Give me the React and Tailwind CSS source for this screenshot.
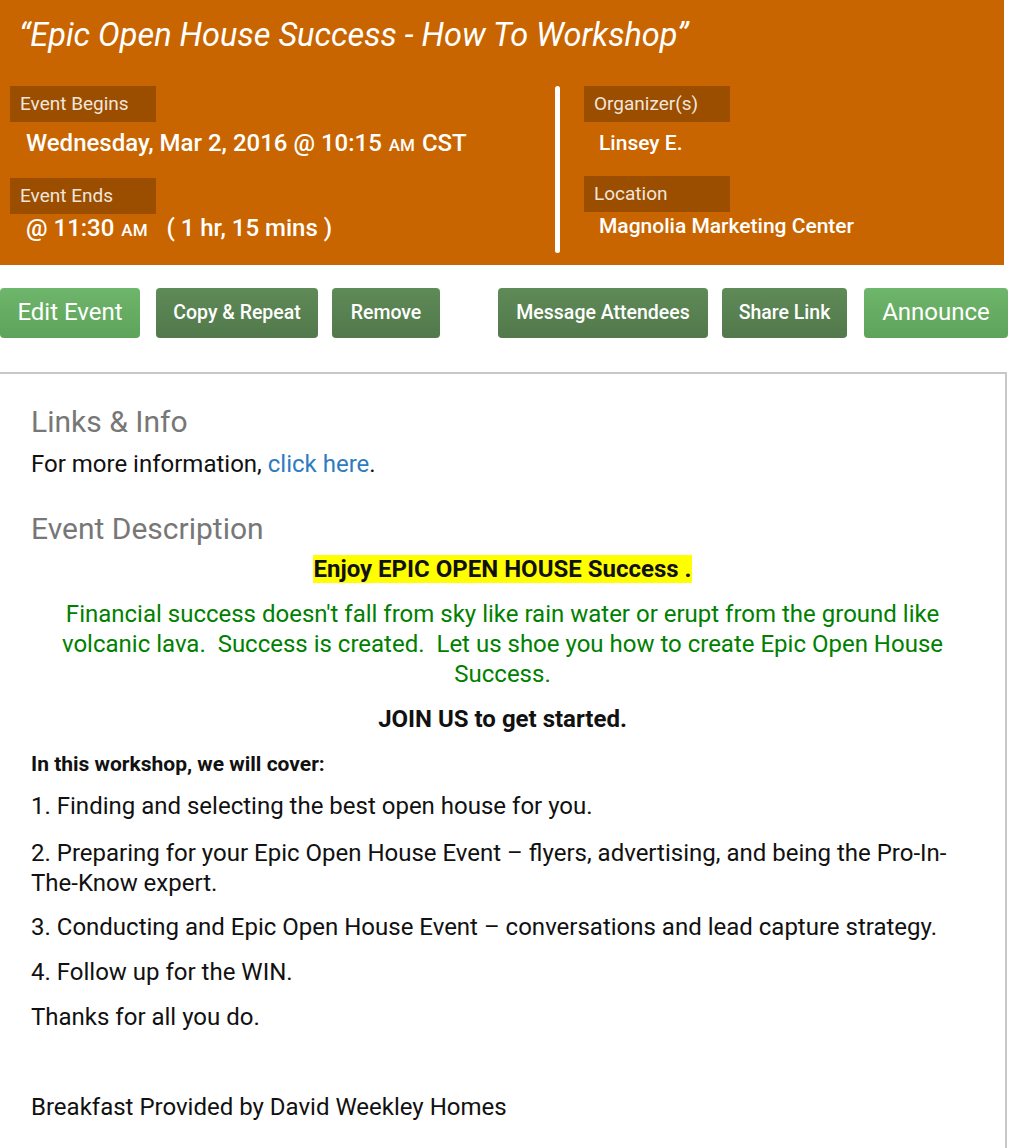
import React from 'react';

function Label({ children }) {
    return (
        <div className="w-[146px] h-[36px] bg-[#9b4d00] pl-[10px] flex items-center text-[19px] text-[#f0e6dc]">
            {children}
        </div>
    );
}

function Am() {
    return <span className="text-[17px] mx-[1px]">AM</span>;
}

export default function App() {
    const light = 'bg-gradient-to-b from-[#6eb66b] to-[#5ea35b] text-white text-[24px] rounded-[4px] h-[50px] flex items-center justify-center pb-[3px]';
    const dark = 'bg-gradient-to-b from-[#5e8b57] to-[#52784b] text-white text-[19.5px] font-medium rounded-[4px] h-[50px] flex items-center justify-center';

    return (
        <div className="min-h-screen bg-white font-['Roboto',sans-serif] w-[1014px]">
            {/* Header */}
            <div className="w-[1004px] bg-[#c96500] pt-[14px] pb-[12px] pl-[10px] text-white">
                <h1 className="pl-[9px] text-[32.5px] leading-[42px] italic">
                    “Epic Open House Success - How To Workshop”
                </h1>

                <div className="mt-[30px] flex h-[167px]">
                    <div className="w-[545px]">
                        <Label>Event Begins</Label>
                        <div className="pt-[6px] pl-[16px] leading-[30px] text-[24px] font-medium">
                            Wednesday, Mar 2, 2016 @ 10:15 <Am /> CST
                        </div>
                        <div className="mt-[18px]">
                            <Label>Event Ends</Label>
                        </div>
                        <div className="pl-[16px] leading-[28px] text-[24px] font-medium whitespace-pre">
                            @ 11:30 <Am />{'   '}( 1 hr, 15 mins )
                        </div>
                    </div>
                    <div className="w-[5px] bg-white rounded-full"></div>
                    <div className="ml-[24px]">
                        <Label>Organizer(s)</Label>
                        <div className="pt-[6px] pl-[15px] leading-[30px] text-[21px] font-medium">
                            Linsey E.
                        </div>
                        <div className="mt-[18px]">
                            <Label>Location</Label>
                        </div>
                        <div className="pl-[15px] leading-[28px] text-[21px] font-medium">
                            Magnolia Marketing Center
                        </div>
                    </div>
                </div>
            </div>

            {/* Actions */}
            <div className="mt-[23px] flex">
                <button className={`${light} w-[140px]`}>Edit Event</button>
                <button className={`${dark} w-[162px] ml-[16px]`}>Copy &amp; Repeat</button>
                <button className={`${dark} w-[108px] ml-[14px]`}>Remove</button>
                <button className={`${dark} w-[210px] ml-[58px]`}>Message Attendees</button>
                <button className={`${dark} w-[125px] ml-[14px]`}>Share Link</button>
                <button className={`${light} w-[144px] ml-[17px]`}>Announce</button>
            </div>

            {/* Details */}
            <div className="mt-[34px] w-[1007px] border-t-2 border-r-2 border-[#c8c8c8] pt-[31px] pl-[31px] pr-[31px] pb-[80px] text-[24px] leading-[30px] text-[#111]">
                <h2 className="text-[30px] leading-[34px] text-[#777]">Links &amp; Info</h2>
                <p className="mt-[10px]">
                    For more information, <a className="text-[#2f7bbf]">click here</a>.
                </p>

                <h2 className="mt-[33px] text-[30px] leading-[34px] text-[#777]">Event Description</h2>
                <p className="mt-[8px] text-center font-bold">
                    <span className="bg-[#ffff00]">Enjoy EPIC OPEN HOUSE Success .</span>
                </p>
                <p className="mt-[15px] text-center text-[#008000]">
                    Financial success doesn't fall from sky like rain water or erupt from the ground like volcanic lava.&nbsp; Success is created.&nbsp; Let us shoe you how to create Epic Open House Success.
                </p>
                <p className="mt-[15px] text-center font-bold">JOIN US to get started.</p>
                <p className="mt-[15px] text-[21px] font-bold">In this workshop, we will cover:</p>
                <p className="mt-[12px]">1. Finding and selecting the best open house for you.</p>
                <p className="mt-[17px]">2. Preparing for your Epic Open House Event – flyers, advertising, and being the Pro-In-The-Know expert.</p>
                <p className="mt-[14px]">3. Conducting and Epic Open House Event – conversations and lead capture strategy.</p>
                <p className="mt-[15px]">4. Follow up for the WIN.</p>
                <p className="mt-[15px]">Thanks for all you do.</p>
                <p className="mt-[15px] h-[30px]"></p>
                <p className="mt-[15px]">Breakfast Provided by David Weekley Homes</p>
            </div>
        </div>
    );
}
